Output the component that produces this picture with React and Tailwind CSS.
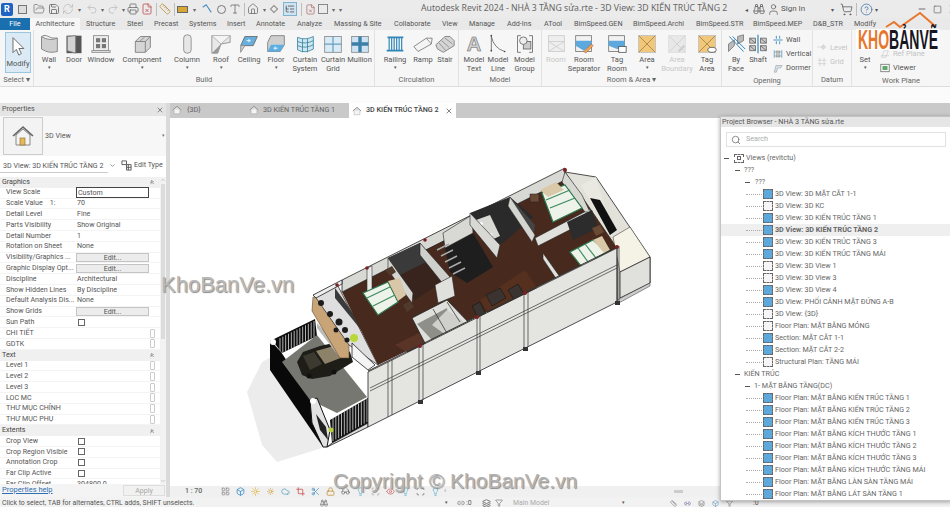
import React from 'react';
import { FolderOpen, Save, Undo2, Redo2, Printer, House, Search, CircleHelp, ShoppingCart, User, Minus, Square, X, ChevronDown, ChevronsUp, ChevronUp, Binoculars, RefreshCw, Ruler, Type, Filter, Link2, Layers, LayoutGrid, Box, Sun, SunDim, Cloud, Crop, Lightbulb, Glasses, Scan, Scissors, Eye, Lock, ListTree, FileX } from 'lucide-react';

const font = "font-['Roboto','Noto_Sans',sans-serif]";

const tabs = [
    ['File', 'w-[30px] bg-[#1a6fae] text-white justify-center'],
    ['Architecture', 'w-[50px] bg-[#f6f6f6] justify-center'],
    ['Structure', 'w-[47px] pl-[6px]'],
    ['Steel', 'w-[27px]'],
    ['Precast', 'w-[35px]'],
    ['Systems', 'w-[38px]'],
    ['Insert', 'w-[29px]'],
    ['Annotate', 'w-[41px]'],
    ['Analyze', 'w-[37px]'],
    ['Massing & Site', 'w-[60px]'],
    ['Collaborate', 'w-[48px]'],
    ['View', 'w-[27px]'],
    ['Manage', 'w-[38px]'],
    ['Add-Ins', 'w-[37px]'],
    ['ATool', 'w-[30px]'],
    ['BimSpeed.GEN', 'w-[59px]'],
    ['BimSpeed.Archi', 'w-[63px]'],
    ['BimSpeed.STR', 'w-[57px]'],
    ['BimSpeed.MEP', 'w-[60px]'],
    ['D&B_STR', 'w-[41px]'],
    ['Modify', 'w-[30px]'],
];

// ve icon ribbon, viewBox 24x24
const icons = {
    wall: <><path d="M3 3Q12 9 22 5V21Q12 24 3 18Z" fill="#cfcfcf" stroke="#777" /><path d="M3 3Q6 1 9 2Q15 6 22 5" fill="#eee" stroke="#777" /></>,
    door: <><rect x="3" y="2" width="18" height="21" fill="#555" /><path d="M4 3L14 2V23L4 20Z" fill="#d2d2d2" stroke="#777" /></>,
    window: <><rect x="3" y="2" width="18" height="18" fill="#ededed" stroke="#888" /><rect x="6" y="5" width="5" height="5" fill="#777" /><rect x="13" y="5" width="5" height="5" fill="#777" /><rect x="6" y="12" width="5" height="5" fill="#777" /><rect x="13" y="12" width="5" height="5" fill="#777" /><rect x="1" y="20" width="22" height="2" fill="#eee" stroke="#888" /></>,
    component: <><path d="M4 9L10 3H22V16L16 22H4Z" fill="#d5d5d5" stroke="#777" /><path d="M4 9H16V22M16 9L22 3" fill="none" stroke="#777" /><path d="M9 9L15 4" stroke="#888" /></>,
    column: <rect x="8" y="1" width="9" height="22" rx="4" fill="#e6e6e6" stroke="#888" />,
    roof: <><path d="M1 2H23V10L12 12L8 23H1Z" fill="#e8e8e8" stroke="#888" /><path d="M1 2L12 12L23 2" fill="#f4f4f4" stroke="#aaa" /><path d="M1 23L12 12L8 23Z" fill="#999" /></>,
    ceiling: <><path d="M7 3H22L17 14H2Z" fill="#67b0dd" stroke="#666" /><path d="M9 8H14M12 6V10" stroke="#fff" /><path d="M2 14V22L7 14" fill="#ccc" stroke="#888" /></>,
    floor: <><path d="M6 2H22V13L17 21H2V10Z" fill="#cfcfcf" stroke="#777" /><path d="M6 13H22L17 21H2Z" fill="#5caee2" /><path d="M9 17H14M11 15V19" stroke="#fff" /></>,
    csystem: <><path d="M3 4Q12 8 22 3V18Q12 24 3 19Z" fill="#cfe6f2" stroke="#37859f" /><path d="M9 6V22M15 6V22M3 9Q12 13 22 8M3 14Q12 18 22 13" fill="none" stroke="#37859f" /></>,
    cgrid: <><rect x="2" y="3" width="20" height="19" fill="#d8ebf6" stroke="#888" /><path d="M12 3V22M2 12H22" stroke="#6b9fbe" strokeWidth="1.5" /></>,
    mullion: <><rect x="2" y="3" width="20" height="19" fill="#cfe4f2" stroke="#888" /><path d="M12 3V22M2 12H22" stroke="#3d7fa8" strokeWidth="4" /></>,
    railing: <><path d="M3 4H22M2 20H22" stroke="#2f86b8" strokeWidth="2" /><path d="M5 4V20M8 4V20M11 4V20M14 4V20M17 4V20M20 4V20" stroke="#2f86b8" strokeWidth="1.4" /></>,
    ramp: <><path d="M1 15L16 5H23L22 12L6 21Z" fill="#f4f4f4" stroke="#777" /><path d="M16 5L22 12" stroke="#888" /></>,
    stair: <><path d="M1 13L12 3H18L23 8V14L10 22L3 18Z" fill="#d5d5d5" stroke="#777" /><path d="M5 11L13 20M8 8L17 16M12 5L21 12" stroke="#888" /></>,
    mtext: <><text x="12" y="20" textAnchor="middle" fontSize="24" fontWeight="700" fontFamily="Liberation Sans" fill="#cfcfcf" stroke="#666" strokeWidth="0.7">A</text></>,
    mline: <><path d="M4 2V20M4 3Q7 17 20 21" fill="none" stroke="#666" /><circle cx="4" cy="2" r="1" fill="#444" /><circle cx="4" cy="20" r="1" fill="#444" /><circle cx="20" cy="21" r="1" fill="#444" /></>,
    mgroup: <><path d="M7 2H3V22H7M17 2H21V22H17" fill="none" stroke="#666" /><rect x="10" y="9" width="9" height="9" fill="#ccc" stroke="#666" /><circle cx="10" cy="8" r="4.5" fill="#eee" stroke="#666" /></>,
    room: <><rect x="3" y="2" width="19" height="19" fill="#eee" stroke="#ccc" /><path d="M3 9L22 21M22 9L3 21M3 9H22" stroke="#ccc" fill="none" /></>,
    rsep: <><rect x="2" y="2" width="19" height="19" fill="#f2f2f2" stroke="#777" /><path d="M2 8H21V14L12 20L2 14Z" fill="#5da8dc" /><path d="M12 21L21 12L23 14L14 23Z" fill="#e9b04c" stroke="#c33" strokeWidth="0.6" /></>,
    tagroom: <><rect x="2" y="2" width="19" height="19" fill="#f2f2f2" stroke="#777" /><path d="M2 8H21V16L12 18L2 14Z" fill="#5da8dc" /><rect x="14" y="15" width="9" height="7" fill="#fff" stroke="#555" /></>,
    area: <><rect x="2" y="2" width="20" height="20" fill="#f1c77a" stroke="#bbb" /><path d="M2 2L22 22M22 2L2 22" stroke="#a2814a" /></>,
    aboundary: <><rect x="2" y="2" width="20" height="20" fill="#e8e8e8" stroke="#ddd" /><path d="M2 2L22 22M22 2L2 22" stroke="#d0d0d0" /><path d="M13 20L20 13L22 15L15 22Z" fill="#cfcfcf" /></>,
    tagarea: <><rect x="2" y="2" width="20" height="20" fill="#f1c77a" stroke="#bbb" /><path d="M2 2L22 22M22 2L2 22" stroke="#a2814a" /><ellipse cx="18" cy="19" rx="5" ry="3" fill="#fff" stroke="#555" /></>,
    byface: <><path d="M3 12L10 7V14L3 21ZM14 3L21 1V8L14 12Z" fill="#bbb" stroke="#777" /><path d="M4 3L21 21M8 3L23 18" stroke="#2f86b8" strokeWidth="1.2" /></>,
    shaft: <><path d="M2 5H9V11H2ZM15 5H22V11H15ZM2 14H9V20H2ZM15 14H22V20H15Z" fill="#ccc" stroke="#666" /><path d="M2 5L9 11M15 5L22 11M2 14L9 20M15 14L22 20" stroke="#666" /><path d="M12 1V23" stroke="#2f86b8" strokeWidth="1.4" /></>,
    swall: <path d="M1 12H23M8 2V9M16 2V9M8 15V22M16 15V22" stroke="#2f86b8" strokeWidth="2" />,
    svert: <><path d="M3 3V21M21 3V21" stroke="#2f86b8" strokeWidth="1.6" /><path d="M7 5H17V10H7ZM7 14H17V19H7Z" fill="#ccc" stroke="#555" /></>,
    sdormer: <path d="M3 22L7 6H22L18 12H11L8 22Z" fill="#d5e6f0" stroke="#777" />,
    slevel: <path d="M1 12H15M15 6L21 12L15 18L11 12Z" fill="#ddd" stroke="#ccc" strokeWidth="1.6" />,
    sgrid: <path d="M7 2V22M17 2V22M2 8H22M2 16H22" stroke="#ccc" strokeWidth="1.6" fill="none" />,
    sref: <path d="M4 20L10 4H20L14 20Z M2 16H22" fill="none" stroke="#ccc" strokeWidth="1.6" />,
    sviewer: <><rect x="2" y="3" width="20" height="18" fill="#fff" stroke="#555" strokeWidth="1.6" /><rect x="6" y="7" width="12" height="10" fill="#5fa86a" /></>,
};

const Ico = ({ name, className = 'w-[20px] h-[20px]' }) => (
    <svg viewBox="0 0 24 24" className={className} strokeWidth="1">{icons[name]}</svg>
);

function Tool({ w, icon, label, label2, arrow, muted }) {
    return (
        <div className={`${w} shrink-0 flex flex-col items-center`}>
            <div className="h-[22px] flex items-center justify-center"><Ico name={icon} /></div>
            <div className={`text-[7.5px] leading-[9px] text-center whitespace-nowrap ${muted ? 'text-[#c8c8c8]' : 'text-[#555]'}`}>
                {label}
                {label2 && <><br />{label2}</>}
            </div>
            {arrow && <div className="text-[5px] leading-[6px] text-[#555]">▾</div>}
        </div>
    );
}

function Panel({ w, title, children, line = true }) {
    return (
        <div className={`${w} shrink-0 flex flex-col h-full ${line ? 'border-r border-[#e2e2e2]' : ''}`}>
            <div className="h-[45px] pt-[3px] flex">{children}</div>
            <div className="flex-1 text-center text-[7.5px] leading-[12px] text-[#666]">{title}</div>
        </div>
    );
}

const SmallTool = ({ label, muted, icon }) => (
    <div className={`h-[14.5px] flex items-center gap-[3px] text-[7.5px] whitespace-nowrap ${muted ? 'text-[#c4c4c4]' : 'text-[#555]'}`}>
        <Ico name={icon} className="w-[10px] h-[10px]" />
        {label}
    </div>
);

function Ribbon() {
    return (
        <div className="h-[57px] flex bg-[#f6f6f6] border-b border-[#dcdcdc]">
            <div className="w-[34px] shrink-0 flex flex-col border-r border-[#e2e2e2]">
                <div className="mt-[2px] ml-[5px] w-[26px] h-[43px] bg-[#dbeaf4] border border-[#9cc6e0] flex flex-col items-center">
                    <svg viewBox="0 0 24 24" className="w-[20px] h-[22px] mt-[2px]"><path d="M6 2V20L10 16L13 23L16 21L13 15H19Z" fill="#fff" stroke="#555" strokeWidth="1" /></svg>
                    <div className="text-[7.5px] leading-[12px] text-[#555] mt-px">Modify</div>
                </div>
                <div className="text-[7.5px] leading-[12px] text-[#666] text-center mt-[1px]">Select ▾</div>
            </div>
            <Panel w="w-[341px]" title="Build">
                <Tool w="w-[30px]" icon="wall" label="Wall" arrow />
                <Tool w="w-[20px]" icon="door" label="Door" />
                <Tool w="w-[34px]" icon="window" label="Window" />
                <Tool w="w-[48px]" icon="component" label="Component" arrow />
                <Tool w="w-[42px]" icon="column" label="Column" arrow />
                <Tool w="w-[26px]" icon="roof" label="Roof" arrow />
                <Tool w="w-[30px]" icon="ceiling" label="Ceiling" />
                <Tool w="w-[24px]" icon="floor" label="Floor" arrow />
                <Tool w="w-[34px]" icon="csystem" label="Curtain" label2="System" />
                <Tool w="w-[22px]" icon="cgrid" label="Curtain" label2="Grid" />
                <Tool w="w-[31px]" icon="mullion" label="Mullion" />
            </Panel>
            <Panel w="w-[84px]" title="Circulation">
                <Tool w="w-[40px]" icon="railing" label="Railing" arrow />
                <Tool w="w-[16px]" icon="ramp" label="Ramp" />
                <Tool w="w-[28px]" icon="stair" label="Stair" />
            </Panel>
            <Panel w="w-[83px]" title="Model">
                <Tool w="w-[30px]" icon="mtext" label="Model" label2="Text" />
                <Tool w="w-[18px]" icon="mline" label="Model" label2="Line" />
                <Tool w="w-[35px]" icon="mgroup" label="Model" label2="Group" />
            </Panel>
            <Panel w="w-[180px]" title="Room & Area ▾">
                <Tool w="w-[28px]" icon="room" label="Room" muted />
                <Tool w="w-[28px]" icon="rsep" label="Room" label2="Separator" />
                <Tool w="w-[38px]" icon="tagroom" label="Tag" label2="Room" />
                <Tool w="w-[22px]" icon="area" label="Area" arrow />
                <Tool w="w-[38px]" icon="aboundary" label="Area" label2="Boundary" muted />
                <Tool w="w-[22px]" icon="tagarea" label="Tag" label2="Area" />
            </Panel>
            <Panel w="w-[91px]" title="Opening">
                <Tool w="w-[28px]" icon="byface" label="By" label2="Face" />
                <Tool w="w-[16px]" icon="shaft" label="Shaft" />
                <div className="ml-[7px] flex flex-col">
                    <SmallTool label="Wall" icon="swall" />
                    <SmallTool label="Vertical" icon="svert" />
                    <SmallTool label="Dormer" icon="sdormer" />
                </div>
            </Panel>
            <Panel w="w-[39px]" title="Datum">
                <div className="ml-[4px] flex flex-col mt-[7px]">
                    <SmallTool label="Level" muted icon="slevel" />
                    <SmallTool label="Grid" muted icon="sgrid" />
                </div>
            </Panel>
            <Panel w="w-[98px]" title="Work Plane" line={false}>
                <div className="w-[26px] flex flex-col items-center pt-[22px] text-[7.5px] leading-[9px] text-[#555]">
                    <div>Set</div>
                    <div className="text-[5px] leading-[6px]">▾</div>
                </div>
                <div className="ml-[2px] flex flex-col pt-[14px]">
                    <SmallTool label="Ref Plane" muted icon="sref" />
                    <SmallTool label="Viewer" icon="sviewer" />
                </div>
            </Panel>
        </div>
    );
}

const Slot = ({ w, children }) => <div className={`${w} shrink-0 flex items-center justify-center`}>{children}</div>;
const Sep = ({ w }) => <div className={`${w} shrink-0 flex justify-center`}><span className="w-px h-[13px] bg-[#bdbdbd]"></span></div>;
const Dot = () => <span className="text-[6px] text-[#666]">▾</span>;
const q = 'w-[12px] h-[12px] text-[#666]';
const faint = 'w-[12px] h-[12px] text-[#c6c6c6]';

function TitleBar() {
    return (
        <div className="h-[18px] flex items-center bg-[#ebebeb] text-[8px] text-[#555]">
            <div className="w-[421px] shrink-0 flex items-center">
                <Slot w="w-[14px]"><div className="w-[12px] h-[13px] rounded-[2px] bg-[#1e62c4] text-white text-[9px] leading-[13px] font-bold text-center">R</div></Slot>
                <Slot w="w-[16px]"><span className="w-[9px] h-[9px] border border-[#777] bg-[#ddd]"></span></Slot>
                <Slot w="w-[17px]"><FolderOpen className={q} strokeWidth={1.3} /></Slot>
                <Slot w="w-[14px]"><Save className={q} strokeWidth={1.6} /></Slot>
                <Slot w="w-[14px]"><RefreshCw className="w-[12px] h-[12px] text-[#bbb]" strokeWidth={1.5} /></Slot>
                <Slot w="w-[8px]"><Dot /></Slot>
                <Slot w="w-[17px]"><Undo2 className={faint} /></Slot>
                <Slot w="w-[4px]"><Dot /></Slot>
                <Slot w="w-[17px]"><Redo2 className={faint} /></Slot>
                <Slot w="w-[5px]"><Dot /></Slot>
                <Slot w="w-[14px]"><Printer className={q} strokeWidth={1.5} /></Slot>
                <Slot w="w-[14px]"><FileX className="w-[12px] h-[12px] text-[#b44]" strokeWidth={1.5} /></Slot>
                <Sep w="w-[4px]" />
                <Slot w="w-[14px]"><Ruler className="w-[12px] h-[12px] text-[#b58a33]" strokeWidth={1.5} /></Slot>
                <Sep w="w-[4px]" />
                <Slot w="w-[13px]"><span className="w-[11px] h-[7px] bg-[#d9a834] border border-[#666]"></span></Slot>
                <Slot w="w-[10px]"><Dot /></Slot>
                <Slot w="w-[15px]"><svg viewBox="0 0 14 14" className="w-[12px] h-[12px]"><path d="M2 5L6 2L12 11" fill="none" stroke="#4a90c4" strokeWidth="1.3" /></svg></Slot>
                <Slot w="w-[14px]"><span className="w-[9px] h-[9px] rounded-full border border-[#777]"></span></Slot>
                <Slot w="w-[14px]"><Type className={q} strokeWidth={1.5} /></Slot>
                <Sep w="w-[4px]" />
                <Slot w="w-[14px]"><House className={q} strokeWidth={1.5} /></Slot>
                <Slot w="w-[8px]"><Dot /></Slot>
                <Slot w="w-[12px]"><span className="w-[6px] h-[6px] rotate-45 border border-[#888]"></span></Slot>
                <div className="w-[2px]"></div>
                <Slot w="w-[16px]"><span className="w-[14px] h-[14px] bg-[#cfe3f0] border border-[#7fb2d1] flex items-center justify-center"><ListTree className="w-[10px] h-[10px] text-[#555]" /></span></Slot>
                <Sep w="w-[6px]" />
                <Slot w="w-[12px]"><FileX className="w-[11px] h-[11px] text-[#a66]" strokeWidth={1.5} /></Slot>
                <Slot w="w-[14px]"><span className="w-[10px] h-[10px] border border-[#888]"></span></Slot>
                <Slot w="w-[6px]"><Dot /></Slot>
                <Slot w="w-[9px]"><Dot /></Slot>
            </div>
            <div className="w-[324px] shrink-0 whitespace-nowrap font-['Noto_Sans',sans-serif] text-[8.7px] text-[#666]">Autodesk Revit 2024 - NHÀ 3 TẦNG sửa.rte - 3D View: 3D KIẾN TRÚC TẦNG 2</div>
            <div className="flex items-center text-[#555]">
                <span className="text-[6px] w-[8px]">◂</span>
                <Binoculars className="w-[12px] h-[12px]" strokeWidth={1.5} />
                <User className="w-[13px] h-[13px] ml-[2px]" strokeWidth={1.3} />
                <span className="ml-[1px] w-[50px] text-[8px]">Sign In</span>
                <span className="text-[6px] w-[9px]">▾</span>
                <ShoppingCart className="w-[13px] h-[13px]" strokeWidth={1.4} />
                <Sep w="w-[6px]" />
                <CircleHelp className="w-[13px] h-[13px] text-[#3a6ea5] ml-[1px]" strokeWidth={1.4} />
                <span className="text-[6px] ml-[2px] w-[42px]">▾</span>
                <Minus className="w-[10px] h-[10px]" />
                <Square className="w-[9px] h-[9px] ml-[6px]" strokeWidth={1.6} />
                <X className="w-[12px] h-[12px] ml-[5px]" strokeWidth={1.5} />
            </div>
        </div>
    );
}

const rows = [
    { h: 'Graphics' },
    { n: 'View Scale', box: 'Custom' },
    { n: 'Scale Value    1:', v: '70' },
    { n: 'Detail Level', v: 'Fine' },
    { n: 'Parts Visibility', v: 'Show Original' },
    { n: 'Detail Number', v: '1' },
    { n: 'Rotation on Sheet', v: 'None' },
    { n: 'Visibility/Graphics ...', edit: true },
    { n: 'Graphic Display Opt...', edit: true },
    { n: 'Discipline', v: 'Architectural' },
    { n: 'Show Hidden Lines', v: 'By Discipline' },
    { n: 'Default Analysis Dis...', v: 'None' },
    { n: 'Show Grids', edit: true },
    { n: 'Sun Path', check: true },
    { n: 'CHI TIẾT', side: true },
    { n: 'GDTK', side: true },
    { h: 'Text' },
    { n: 'Level 1', side: true },
    { n: 'Level 2', side: true },
    { n: 'Level 3', side: true },
    { n: 'LOC MC', side: true },
    { n: 'THƯ MỤC CHÍNH', side: true },
    { n: 'THƯ MỤC PHỤ', side: true },
    { h: 'Extents' },
    { n: 'Crop View', check: true },
    { n: 'Crop Region Visible', check: true },
    { n: 'Annotation Crop', check: true },
    { n: 'Far Clip Active', check: true },
    { n: 'Far Clip Offset', v: '304800.0' },
];

function PropRow({ r }) {
    if (r.h) {
        return (
            <div className="h-[10.8px] shrink-0 flex items-center justify-between bg-[#f0f0f0] pl-[2px] pr-[5px] text-[#444]">
                <span>{r.h}</span>
                <ChevronsUp className="w-[6px] h-[6px] text-[#555]" strokeWidth={3} />
            </div>
        );
    }
    return (
        <div className="h-[10.8px] shrink-0 flex items-center border-b border-[#f4f4f4] text-[#555]">
            <div className="w-[76px] shrink-0 pl-[6px] whitespace-pre overflow-hidden">{r.n}</div>
            {r.v && <div className="pl-[1px] whitespace-nowrap">{r.v}</div>}
            {r.box && <div className="w-[73px] h-[11px] border border-[#444] pl-[1px] leading-[9px]">{r.box}</div>}
            {r.edit && <div className="w-[73px] h-[9px] bg-[#ececec] border border-[#c4c4c4] text-center leading-[7px]">Edit...</div>}
            {r.check && <div className="ml-[2px] w-[7px] h-[7px] border border-[#666]"></div>}
            {r.side && <div className="ml-[74px] w-[5px] h-[9px] border border-[#ccc] rounded-[1px]"></div>}
        </div>
    );
}

function Properties() {
    return (
        <div className="w-[166px] shrink-0 flex flex-col bg-white text-[7.1px] relative">
            <div className="h-[13px] bg-[#e4e4e4] flex items-center justify-between px-[2px] text-[#555]">
                <span>Properties</span>
                <X className="w-[8px] h-[8px]" />
            </div>
            <div className="h-[40px] flex items-center bg-[#f7f7f7]">
                <div className="ml-[3px] w-[40px] h-[38px] bg-[#f3f3f3] border border-[#ccc] flex items-center justify-center">
                    <svg viewBox="0 0 24 24" className="w-[24px] h-[24px]"><path d="M2 12L12 3L22 12" fill="#ddd" stroke="#666" strokeWidth="1.6" /><path d="M5 11V21H19V11L12 5Z" fill="#f4f4f4" stroke="#888" /><rect x="9" y="14" width="5" height="7" fill="#e3b95a" stroke="#8a6a22" strokeWidth="0.6" /></svg>
                </div>
                <span className="ml-[2px] flex-1 text-[#555]">3D View</span>
                <span className="text-[5px] mr-[1px] text-[#777]">▾</span>
            </div>
            <div className="h-[17px] pt-[2px] flex items-center bg-white text-[#555]">
                <span className="pl-[3px] w-[108px] border-b border-[#ccc] whitespace-nowrap leading-[13px]">3D View: 3D KIẾN TRÚC TẦNG 2</span>
                <ChevronDown className="w-[7px] h-[7px] ml-[1px]" />
                <svg viewBox="0 0 12 12" className="ml-[5px] w-[11px] h-[11px]"><path d="M1 1H6V5H1ZM6 5H11V11H6ZM8 5V11M6 8H11" fill="none" stroke="#555" strokeWidth="1" /></svg>
                <span className="ml-[2px] whitespace-nowrap">Edit Type</span>
            </div>
            <div className="mt-[4px] flex-1 flex overflow-hidden">
                <div className="w-[160px] shrink-0 flex flex-col overflow-hidden">
                    {rows.map((r, i) => <PropRow key={i} r={r} />)}
                </div>
                <div className="w-[6px] bg-[#f2f2f2] flex flex-col items-center">
                    <ChevronUp className="w-[6px] h-[6px] text-[#999]" />
                    <div className="w-[4px] h-[155px] bg-[#dcdcdc] mt-[1px]"></div>
                    <div className="flex-1"></div>
                    <ChevronDown className="w-[6px] h-[6px] text-[#999]" />
                </div>
            </div>
            <div className="h-[13px] flex items-center justify-between bg-[#f4f4f4] pl-[2px] pr-[1px]">
                <span className="text-[#2f6fb1] underline mb-[3px] text-[7.5px] leading-[9px]">Properties help</span>
                <span className="w-[42px] h-[11px] bg-[#f1f1f1] border border-[#ddd] text-center text-[#aaa] leading-[9px]">Apply</span>
            </div>
        </div>
    );
}

const TabHouse = () => (
    <svg viewBox="0 0 24 24" className="w-[10px] h-[10px] shrink-0"><path d="M2 12L12 3L22 12" fill="#ddd" stroke="#888" strokeWidth="2" /><path d="M5 11V21H19V11" fill="#f4f4f4" stroke="#999" /></svg>
);

function ViewTabs() {
    return (
        <div className="h-[15px] bg-[#c9c9c9] flex items-center text-[7.2px] text-[#666]">
            <div className="w-[78px] pl-[2px] flex items-center gap-[5px]"><TabHouse />{'{3D}'}</div>
            <div className="w-[101px] pl-[1px] flex items-center gap-[4px] whitespace-nowrap"><TabHouse />3D KIẾN TRÚC TẦNG 1</div>
            <div className="w-[107px] h-[15px] pl-[3px] pr-[3px] bg-white flex items-center gap-[4px] text-[#444] whitespace-nowrap font-medium"><TabHouse />3D KIẾN TRÚC TẦNG 2<X className="w-[8px] h-[8px] ml-auto" /></div>
        </div>
    );
}

const lines = (x1, y1, x2, y2, h, n, c = '#ddd') => {
    // cac thanh lan can
    const out = [];
    for (let i = 0; i <= n; i++) {
        const x = x1 + ((x2 - x1) * i) / n;
        const y = y1 + ((y2 - y1) * i) / n;
        out.push(<line key={i} x1={x} y1={y} x2={x} y2={y + h} stroke={c} strokeWidth="0.8" />);
    }
    return out;
};

const Bed = ({ p, s1, s2 }) => (
    <g>
        <polygon points={p} fill="#eef3ea" stroke="#2f7a50" strokeWidth="1.2" />
        <line x1={s1[0]} y1={s1[1]} x2={s1[2]} y2={s1[3]} stroke="#3c8a60" strokeWidth="1.2" />
        <line x1={s2[0]} y1={s2[1]} x2={s2[2]} y2={s2[3]} stroke="#3c8a60" strokeWidth="1.2" />
    </g>
);

function Building() {
    return (
        <svg viewBox="170 118 780 368" className="w-full h-full block">
            <polygon points="247,392 262,362 280,352 325,447 277,462 262,445" fill="#ececec" />
            <polygon points="272,340 315,319 317,336 282,353" fill="#0c0c0c" />
            {lines(280, 338, 314, 321, 16, 12)}
            <polygon points="270,340 281,352 313,400 323,447 270,370" fill="#090909" />
            <polygon points="282,362 317,335 367,397 337,413 310,400" fill="#777772" />
            <polygon points="297,362 303,352 320,346 338,342 350,352 353,362 330,376 312,379 302,375" fill="#1f1d18" />
            <polygon points="316,351 334,346 343,357 325,364" fill="#8c8269" />
            <polygon points="303,356 314,352 322,364 310,370" fill="#3c3930" />
            <circle cx="309" cy="376" r="2.5" fill="#111" />
            <circle cx="334" cy="372" r="2.5" fill="#111" />
            <polygon points="330,420 368,398 368,423 332,443" fill="#101010" />
            {lines(333, 418, 367, 399, 23, 12)}
            <polygon points="310,400 317,398 330,430 327,447 323,447 312,423" fill="#e2e2e2" stroke="#111" strokeWidth="1" />
            <polygon points="316,414 326,427 328,440 320,430" fill="#222" />
            <circle cx="331" cy="430" r="2.5" fill="#b7cf3c" />
            <circle cx="273" cy="342" r="3" fill="#fff" />
            <circle cx="313" cy="401" r="3" fill="#fff" />
            <polygon points="332,443 368,423 368,427 327,447" fill="#ddd" stroke="#111" strokeWidth="0.8" />

            <polygon points="317,323 349,357 340,358 317,328" fill="#bdbdb8" />
            <polygon points="313,297 312,311 340,358 349,358 349,344 322,298" fill="#c9a477" stroke="#5c4630" strokeWidth="0.6" />
            <polygon points="314,295 337,284 378,365 349,345" fill="#dedede" stroke="#333" strokeWidth="0.8" />
            <polygon points="335,288 360,323 362,331 335,298" fill="#3a3a3a" />
            <g fill="#1c1c1c"><circle cx="321" cy="303" r="3" /><circle cx="330" cy="314" r="3" /><circle cx="339" cy="322" r="3.5" /><circle cx="345" cy="330" r="3" /><circle cx="336" cy="330" r="2.5" /><circle cx="347" cy="340" r="2.5" /></g>
            <circle cx="354" cy="338" r="4" fill="#b8d83a" />

            <polygon points="596,177 650,257 650,283 617,303 617,248 565,172" fill="#e2e2da" stroke="#222" strokeWidth="0.8" />
            <polygon points="581,185 596,177 613,237 608,232" fill="#e9e9e2" />
            <polygon points="613,237 630,227 650,257 620,272" fill="#f4f3e6" stroke="#444" strokeWidth="0.6" />
            <polygon points="620,272 650,257 650,283 620,298" fill="#e0e0dc" stroke="#222" strokeWidth="0.8" />
            <polygon points="617,300 650,283 650,286 617,304" fill="#ccc" stroke="#333" strokeWidth="0.5" />

            <polygon points="342,292 565,172 617,248 378,365" fill="#47291e" />
            <polygon points="395,345 455,315 470,340 420,360" fill="#5a3426" />
            <polygon points="480,300 525,270 545,300 495,325" fill="#55301f" />
            <polygon points="352,343 375,365 368,370 352,357" fill="#f4f4f4" stroke="#222" strokeWidth="0.8" />
            <polygon points="342,280 565,168 565,180 342,292" fill="#d8d8d4" stroke="#222" strokeWidth="0.8" />
            <polygon points="313,295 342,280 342,284 316,298" fill="#eee" stroke="#222" strokeWidth="0.8" />
            <polygon points="367,268 372,266 372,292 367,294" fill="#e9e9e9" stroke="#333" strokeWidth="0.6" />

            <polygon points="388,258 420,243 450,277 415,300" fill="#38241d" />
            <polygon points="388,258 420,243 426,262 398,276" fill="#3a3a3a" />
            <polygon points="388,258 413,293 412,303 388,270" fill="#d5d5d1" stroke="#222" strokeWidth="0.6" />
            <polygon points="420,243 450,277 448,290 420,255" fill="#cfcfcb" stroke="#222" strokeWidth="0.6" />
            <polygon points="445,248 473,233 493,267 467,283 450,272" fill="#1e1e1e" />
            <polygon points="443,233 472,215 473,233 445,248" fill="#d8d8d4" stroke="#222" strokeWidth="0.6" />
            <g stroke="#aaa" strokeWidth="1.4"><line x1="437" y1="250" x2="449" y2="244" /><line x1="441" y1="256" x2="453" y2="250" /><line x1="445" y1="262" x2="457" y2="256" /><line x1="449" y1="268" x2="461" y2="262" /><line x1="453" y1="274" x2="465" y2="268" /></g>
            <polygon points="435,285 452,276 455,296 438,303" fill="#e0e0dc" stroke="#222" strokeWidth="0.6" />

            <polygon points="470,213 510,197 533,217 503,243 485,245" fill="#2a2a2a" />
            <polygon points="476,220 490,215 500,236 487,242" fill="#d8d8d4" />
            <circle cx="481" cy="224" r="2" fill="#fff" /><circle cx="491" cy="235" r="2" fill="#eee" />
            <polygon points="470,213 500,245 497,258 470,225" fill="#d8d8d4" stroke="#222" strokeWidth="0.6" />
            <polygon points="510,197 535,225 533,240 510,210" fill="#444" />

            <polygon points="412,318 447,300 473,327 427,347" fill="#dfdfdb" stroke="#222" strokeWidth="0.8" />
            <polygon points="417,324 447,308 450,330 432,340" fill="#8f8f8a" />
            <polygon points="432,325 447,310 468,325 450,338" fill="#cfcfcb" />
            <g stroke="#222" strokeWidth="0.7"><line x1="433" y1="309" x2="448" y2="335" /><line x1="447" y1="302" x2="460" y2="322" /></g>

            <polygon points="535,238 590,209 593,218 538,246" fill="#e0e0dc" stroke="#222" strokeWidth="0.6" />
            <polygon points="567,222 592,210 598,228 573,240" fill="#2c2c2c" />
            <polygon points="543,253 560,277 557,280 543,259" fill="#e0e0dc" stroke="#222" strokeWidth="0.6" />
            <polygon points="510,197 535,235 532,242 508,206" fill="#d4d4d0" stroke="#222" strokeWidth="0.5" />
            <polygon points="590,198 600,200 617,230 610,235" fill="#111" />
            <polygon points="565,172 582,195 590,212 585,212 562,182" fill="#d8d8d2" stroke="#222" strokeWidth="0.6" />

            <Bed p="363,293 388,282 398,302 378,315" s1={[367, 298, 392, 286]} s2={[373, 306, 395, 295]} />
            <polygon points="388,281 400,278 406,295 398,301" fill="#d8c7a8" />
            <Bed p="542,193 565,185 582,208 553,222" s1={[546, 200, 570, 190]} s2={[550, 208, 575, 198]} />
            <polygon points="540,190 556,182 564,190 548,197" fill="#d9c9a8" />
            <Bed p="570,252 593,240 607,252 582,267" s1={[578, 248, 588, 262]} s2={[585, 244, 596, 258]} />
            <polygon points="593,240 602,236 610,250 604,253" fill="#d9c9a8" />
            <rect x="530" y="194" width="9" height="8" fill="#6a4a35" stroke="#222" strokeWidth="0.5" />
            <polygon points="592,228 600,225 604,232 596,236" fill="#6a4a35" />
            <polygon points="385,270 392,266 396,272 390,276" fill="#503a2c" />
            <polygon points="403,305 410,301 414,307 407,312" fill="#503a2c" />
            <polygon points="486,295 500,288 506,298 492,306" fill="#3a3330" stroke="#111" strokeWidth="0.5" />
            <polygon points="508,290 518,284 524,294 514,300" fill="#3a3330" stroke="#111" strokeWidth="0.5" />
            <polygon points="472,306 480,302 486,314 478,318" fill="#3a3330" stroke="#111" strokeWidth="0.5" />

            <polygon points="368,372 617,248 617,302 368,427" fill="#e4e4e0" stroke="#222" strokeWidth="0.8" />
            <g stroke="#333" strokeWidth="0.7">
                <line x1="370" y1="388" x2="617" y2="265" />
                <line x1="370" y1="391" x2="617" y2="268" />
                <line x1="368" y1="371" x2="617" y2="247" strokeWidth="1" />
                <line x1="388" y1="362" x2="388" y2="417" />
                <line x1="392" y1="360" x2="392" y2="415" />
                <line x1="419" y1="346" x2="419" y2="402" />
                <line x1="423" y1="344" x2="423" y2="400" />
                <line x1="477" y1="317" x2="477" y2="373" />
                <line x1="480" y1="316" x2="480" y2="372" />
                <line x1="524" y1="293" x2="524" y2="349" />
                <line x1="528" y1="291" x2="528" y2="347" />
                <line x1="617" y1="247" x2="617" y2="303" />
                <line x1="619" y1="246" x2="619" y2="302" />
            </g>
            <g fill="#333"><rect x="418" y="400" width="5" height="4" /><rect x="476" y="371" width="5" height="4" /><rect x="523" y="347" width="5" height="4" /><rect x="615" y="301" width="5" height="4" /></g>
            <g fill="#7a1f22"><circle cx="337" cy="285" r="1.8" /><circle cx="367" cy="268" r="1.8" /><circle cx="425" cy="240" r="1.8" /><circle cx="565" cy="170" r="2" /><circle cx="617" cy="247" r="2" /><circle cx="420" cy="346" r="2" /><circle cx="477" cy="317" r="2" /><circle cx="525" cy="293" r="2" /></g>
        </svg>
    );
}

const browser = [
    { t: 'Views (revitctu)', k: 'root' },
    { t: '???', k: 'l1' },
    { t: '???', k: 'l2' },
    { t: '3D View: 3D MẶT CẮT 1-1', f: 1 },
    { t: '3D View: 3D KC', f: 0 },
    { t: '3D View: 3D KIẾN TRÚC TẦNG 1', f: 1 },
    { t: '3D View: 3D KIẾN TRÚC TẦNG 2', f: 1, active: true },
    { t: '3D View: 3D KIẾN TRÚC TẦNG 3', f: 1 },
    { t: '3D View: 3D KIẾN TRÚC TẦNG MÁI', f: 1 },
    { t: '3D View: 3D View 1', f: 0 },
    { t: '3D View: 3D View 3', f: 0 },
    { t: '3D View: 3D View 4', f: 1 },
    { t: '3D View: PHỐI CẢNH MẶT ĐỨNG A-B', f: 1 },
    { t: '3D View: {3D}', f: 0 },
    { t: 'Floor Plan: MẶT BẰNG MÓNG', f: 0 },
    { t: 'Section: MẶT CẮT 1-1', f: 1 },
    { t: 'Section: MẶT CẮT 2-2', f: 1 },
    { t: 'Structural Plan: TẦNG MÁI', f: 0 },
    { t: 'KIẾN TRÚC', k: 'l1' },
    { t: '1- MẶT BẰNG TẦNG(DC)', k: 'l2b' },
    { t: 'Floor Plan: MẶT BẰNG KIẾN TRÚC TẦNG 1', f: 1 },
    { t: 'Floor Plan: MẶT BẰNG KIẾN TRÚC TẦNG 2', f: 1 },
    { t: 'Floor Plan: MẶT BẰNG KIẾN TRÚC TẦNG 3', f: 1 },
    { t: 'Floor Plan: MẶT BẰNG KÍCH THƯỚC TẦNG 1', f: 1 },
    { t: 'Floor Plan: MẶT BẰNG KÍCH THƯỚC TẦNG 2', f: 1 },
    { t: 'Floor Plan: MẶT BẰNG KÍCH THƯỚC TẦNG 3', f: 1 },
    { t: 'Floor Plan: MẶT BẰNG KÍCH THƯỚC TẦNG MÁI', f: 1 },
    { t: 'Floor Plan: MẶT BẰNG LÀN SÀN TẦNG MÁI', f: 1 },
    { t: 'Floor Plan: MẶT BẰNG LÁT SÀN TẦNG 1', f: 1 },
];

const Dash = () => <span className="w-[5px] h-px bg-[#555] shrink-0"></span>;

function BrowserRow({ r }) {
    const base = 'h-[12px] flex items-center text-[#666] whitespace-nowrap';
    if (r.k === 'root') {
        return (
            <div className={`${base} pl-[3px]`}>
                <Dash />
                <span className="ml-[5px] w-[10px] h-[9px] border border-dashed border-[#666] flex items-center justify-center"><span className="w-[4px] h-[4px] border border-[#666]"></span></span>
                <span className="ml-[2px]">{r.t}</span>
            </div>
        );
    }
    if (r.k === 'l1') return <div className={`${base} pl-[14px]`}><Dash /><span className="ml-[4px]">{r.t}</span></div>;
    if (r.k === 'l2') return <div className={`${base} pl-[24px]`}><Dash /><span className="ml-[5px]">{r.t}</span></div>;
    if (r.k === 'l2b') return <div className={`${base} pl-[24px]`}><Dash /><span className="ml-[4px]">{r.t}</span></div>;
    return (
        <div className={`${base} pl-[25px] ${r.active ? 'bg-[#efefef] font-bold text-[#444]' : ''}`}>
            <span className="w-[16px] border-t border-dotted border-[#aaa]"></span>
            <span className={`ml-[1px] w-[10px] h-[10px] border border-dashed border-[#666] shrink-0 ${r.f ? 'bg-[#5fa8dc]' : 'bg-[#f6f6f6]'}`}></span>
            <span className="ml-[2px]">{r.t}</span>
        </div>
    );
}

function ProjectBrowser() {
    return (
        <div className="absolute left-[720px] top-[116px] w-[232px] h-[385px] bg-white border border-[#c4c4c4] shadow-[0_1px_4px_rgba(0,0,0,0.35)] text-[7.2px] overflow-hidden">
            <div className="h-[10px] bg-[#e6e6e6] pl-px leading-[10px] text-[#555] whitespace-nowrap">Project Browser - NHÀ 3 TẦNG sửa.rte</div>
            <div className="mx-[5px] mt-[5px] h-[15px] border border-[#e2e2e2] flex items-center pl-[4px] text-[#aaa]">
                <Search className="w-[10px] h-[10px] text-[#777]" />
                <span className="ml-[5px]">Search</span>
            </div>
            <div className="mt-[5px]">
                {browser.map((r, i) => <BrowserRow key={i} r={r} />)}
            </div>
        </div>
    );
}

const ctrl = [
    [LayoutGrid, 'text-[#888]'],
    [Box, 'text-[#2f86c8]'],
    [Sun, 'text-[#e0b030]'],
    [SunDim, 'text-[#c9a040]'],
    [Cloud, 'text-[#5aa0c0]'],
    [Crop, 'text-[#c44]'],
    [Scissors, 'text-[#4a90c0]'],
    [Lock, 'text-[#c49030]'],
    [Glasses, 'text-[#777]'],
    [Lightbulb, 'text-[#5ab0d0]'],
    [Scan, 'text-[#aaa]'],
    [Eye, 'text-[#c66]'],
    [Lightbulb, 'text-[#5ab0d0]'],
    [Scan, 'text-[#777]'],
    [Lightbulb, 'text-[#5ab0d0]'],
];

function ViewControl() {
    return (
        <div className="h-[11px] bg-[#f0f0f0] flex items-center text-[7px] text-[#666]">
            <span className="ml-[15px] w-[36px] font-medium">1 : 70</span>
            <div className="flex gap-[6px]">
                {ctrl.map(([Icon, c], i) => <Icon key={i} className={`w-[9px] h-[9px] ${c}`} strokeWidth={2} />)}
            </div>
            <span className="ml-[4px] text-[#888]">‹</span>
            <span className="ml-[228px] w-[9px] h-[3px] bg-[#ccc]"></span>
        </div>
    );
}

function StatusBar() {
    return (
        <div className="h-[10px] pt-[2px] bg-[#f2f2f2] flex items-center text-[6.9px] text-[#555] whitespace-nowrap">
            <span className="w-[320px] pl-[2px]">Click to select, TAB for alternates, CTRL adds, SHIFT unselects.</span>
            <Binoculars className="w-[8px] h-[8px] text-[#777]" />
            <span className="ml-[117px] text-[5px] w-[12px]">▾</span>
            <Link2 className="w-[8px] h-[8px] text-[#777]" />
            <span className="ml-px w-[16px]">:0</span>
            <Layers className="w-[9px] h-[9px] text-[#555]" />
            <Filter className="w-[8px] h-[8px] ml-[4px] text-[#777]" />
            <span className="ml-[10px] w-[109px] text-[#aaa]">Main Model</span>
            <span className="text-[5px]">▾</span>
            <span className="ml-[45px] flex gap-[7px]">
                <Ruler className="w-[7px] h-[7px] text-[#777]" />
                <Link2 className="w-[7px] h-[7px] text-[#669]" />
                <Layers className="w-[7px] h-[7px] text-[#777]" />
                <Box className="w-[7px] h-[7px] text-[#69b]" />
                <Filter className="w-[7px] h-[7px] text-[#777]" />
            </span>
            <span className="ml-[20px]">:0</span>
        </div>
    );
}

export default function App() {
    return (
        <div className={`${font} relative w-[950px] h-[507px] overflow-hidden bg-white flex flex-col`}>
            <TitleBar />
            <div className="h-[12px] flex bg-[#e9e9e9] text-[7.2px] text-[#555]">
                {tabs.map(([t, c]) => (
                    <div key={t} className={`${c} shrink-0 flex items-center whitespace-nowrap leading-[12px]`}>{t}</div>
                ))}
            </div>
            <Ribbon />
            <div className="h-[16px] bg-[#fbfbfb]"></div>
            <div className="flex-1 flex min-h-0">
                <Properties />
                <div className="w-[4px] bg-[#dadada]"></div>
                <div className="flex-1 flex flex-col min-w-0">
                    <ViewTabs />
                    <div className="flex-1 min-h-0 bg-white"><Building /></div>
                    <ViewControl />
                </div>
            </div>
            <StatusBar />

            <ProjectBrowser />

            {/* logo goc phai */}
            <div className="absolute left-[856px] top-[11px] w-[84px] h-[39px]">
                <svg viewBox="0 0 84 18" className="w-[84px] h-[18px] block"><path d="M30 16L38 11L44 16L64 2L79 15" fill="none" stroke="#e8772e" strokeWidth="2" /></svg>
                <div className="bg-white/90 h-[21px] pl-[2px] overflow-visible font-['Liberation_Sans',sans-serif] font-bold text-[28px] leading-[21px] whitespace-nowrap">
                    <div className="inline-block origin-left scale-x-[0.5]">
                        <span className="text-[#e8772e]">KHO</span><span className="text-[#17171f]">BẢNVẼ</span>
                    </div>
                </div>
            </div>

            {/* watermark */}
            <div className="absolute left-[161px] top-[272px] font-['Liberation_Sans',sans-serif] text-[22px] leading-[26px] text-[#b9b9b9] [text-shadow:1px_1px_1px_#8a8a8a] whitespace-nowrap">KhoBanVe.vn</div>
            <div className="absolute left-[333px] top-[468px] font-['Liberation_Sans',sans-serif] text-[21px] leading-[26px] text-[#b4b4b4] [text-shadow:1px_1px_1px_#8a8a8a] whitespace-nowrap">Copyright © KhoBanVe.vn</div>
        </div>
    );
}
